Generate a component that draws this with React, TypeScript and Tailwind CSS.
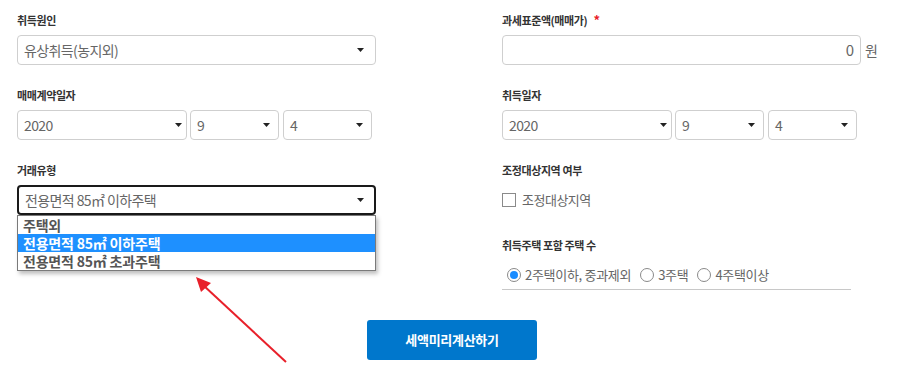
import React from "react";

const font = { fontFamily: '"Noto Sans CJK KR", "Noto Sans", sans-serif' };

const Caret = () => (
    <svg width="7" height="4" viewBox="0 0 7 4" className="shrink-0">
        <path d="M0 0 L7 0 L3.5 4 Z" fill="#222" />
    </svg>
);

interface SelectBoxProps {
    value: string;
    width: string;
    caretPad: string;
    focused?: boolean;
}

const SelectBox = ({ value, width, caretPad, focused }: SelectBoxProps) => (
    <div
        className={`${width} h-[30px] flex items-center justify-between pl-[6px] ${caretPad} rounded-[4px] bg-white ${
            focused ? "border-2 border-[#1a1a1a] pl-[5px]" : "border border-[#cfcfcf]"
        }`}
    >
        <span className="text-[14px] text-[#666] tracking-[-0.6px] leading-none">{value}</span>
        <Caret />
    </div>
);

const Label = ({ children }: { children: React.ReactNode }) => (
    <div className="h-[20px] leading-[20px] text-[11px] font-bold text-[#333] tracking-[-0.4px]">
        {children}
    </div>
);

const DateRow = () => (
    <div className="flex mt-[5px]">
        <SelectBox value="2020" width="w-[170px]" caretPad="pr-[4px]" />
        <div className="ml-[3px]">
            <SelectBox value="9" width="w-[89px]" caretPad="pr-[8px]" />
        </div>
        <div className="ml-[4px]">
            <SelectBox value="4" width="w-[89px]" caretPad="pr-[8px]" />
        </div>
    </div>
);

const Radio = ({ checked, label }: { checked?: boolean; label: string }) => (
    <div className="flex items-center">
        <span className="w-[14px] h-[14px] rounded-full border border-[#8a8a8a] flex items-center justify-center bg-white">
            {checked && <span className="w-[8px] h-[8px] rounded-full bg-[#1a8cff]" />}
        </span>
        <span className="ml-[4px] text-[13px] text-[#666] tracking-[-0.3px]">{label}</span>
    </div>
);

export default function App() {
    return (
        <div className="relative w-[904px] h-[388px] bg-white overflow-hidden" style={font}>
            <div className="flex pl-[17px] pt-[10px] gap-[126px]">
                {/* left column */}
                <div className="w-[359px] flex flex-col">
                    <Label>취득원인</Label>
                    <div className="mt-[5px]">
                        <SelectBox value="유상취득(농지외)" width="w-[359px]" caretPad="pr-[11px]" />
                    </div>

                    <div className="mt-[20px]">
                        <Label>매매계약일자</Label>
                    </div>
                    <DateRow />

                    <div className="mt-[20px]">
                        <Label>거래유형</Label>
                    </div>
                    <div className="relative mt-[5px]">
                        <SelectBox
                            value="전용면적 85㎡ 이하주택"
                            width="w-[359px]"
                            caretPad="pr-[10px]"
                            focused
                        />
                        <div className="absolute left-0 top-full w-[359px] border border-[#7a7a7a] bg-white shadow-[2px_3px_4px_rgba(0,0,0,0.25)]">
                            <div className="h-[18px] leading-[18px] pl-[5px] text-[14px] font-bold text-[#555] tracking-[-0.2px]">
                                주택외
                            </div>
                            <div className="h-[18px] leading-[18px] pl-[5px] text-[14px] font-bold text-white bg-[#1e90ff] tracking-[-0.2px]">
                                전용면적 85㎡ 이하주택
                            </div>
                            <div className="h-[18px] leading-[18px] pl-[5px] text-[14px] font-bold text-[#555] tracking-[-0.2px]">
                                전용면적 85㎡ 초과주택
                            </div>
                        </div>
                    </div>
                </div>

                {/* right column */}
                <div className="w-[380px] flex flex-col">
                    <Label>
                        과세표준액(매매가) <span className="ml-[4px] text-[#e8202a] text-[13px]">*</span>
                    </Label>
                    <div className="mt-[5px] flex items-center">
                        <div className="w-[359px] h-[30px] border border-[#cfcfcf] rounded-[4px] flex items-center justify-end pr-[6px]">
                            <span className="text-[15px] text-[#666]">0</span>
                        </div>
                        <span className="ml-[4px] text-[14px] text-[#666]">원</span>
                    </div>

                    <div className="mt-[20px]">
                        <Label>취득일자</Label>
                    </div>
                    <DateRow />

                    <div className="mt-[20px]">
                        <Label>조정대상지역 여부</Label>
                    </div>
                    <div className="mt-[5px] h-[30px] flex items-center">
                        <span className="w-[14px] h-[14px] border border-[#8a8a8a] bg-white" />
                        <span className="ml-[6px] text-[13px] text-[#666] tracking-[-0.5px]">조정대상지역</span>
                    </div>

                    <div className="mt-[20px]">
                        <Label>취득주택 포함 주택 수</Label>
                    </div>
                    <div className="mt-[5px] w-[349px] h-[30px] border-b border-[#c8c8c8] flex items-center gap-[9px] pl-[5px]">
                        <Radio checked label="2주택이하, 중과제외" />
                        <Radio label="3주택" />
                        <Radio label="4주택이상" />
                    </div>
                </div>
            </div>

            <div className="flex justify-center mt-[30px]">
                <button className="w-[170px] h-[40px] rounded-[3px] bg-[#0077cc] text-white text-[13px] font-bold tracking-[-0.3px]">
                    세액미리계산하기
                </button>
            </div>

            {/* annotation arrow */}
            <svg className="absolute left-0 top-0 pointer-events-none" width="904" height="388">
                <line x1="286" y1="362" x2="203" y2="285" stroke="#e8202a" strokeWidth="2" />
                <path d="M196 277 L201 292 L211 283 Z" fill="#e8202a" />
            </svg>
        </div>
    );
}
